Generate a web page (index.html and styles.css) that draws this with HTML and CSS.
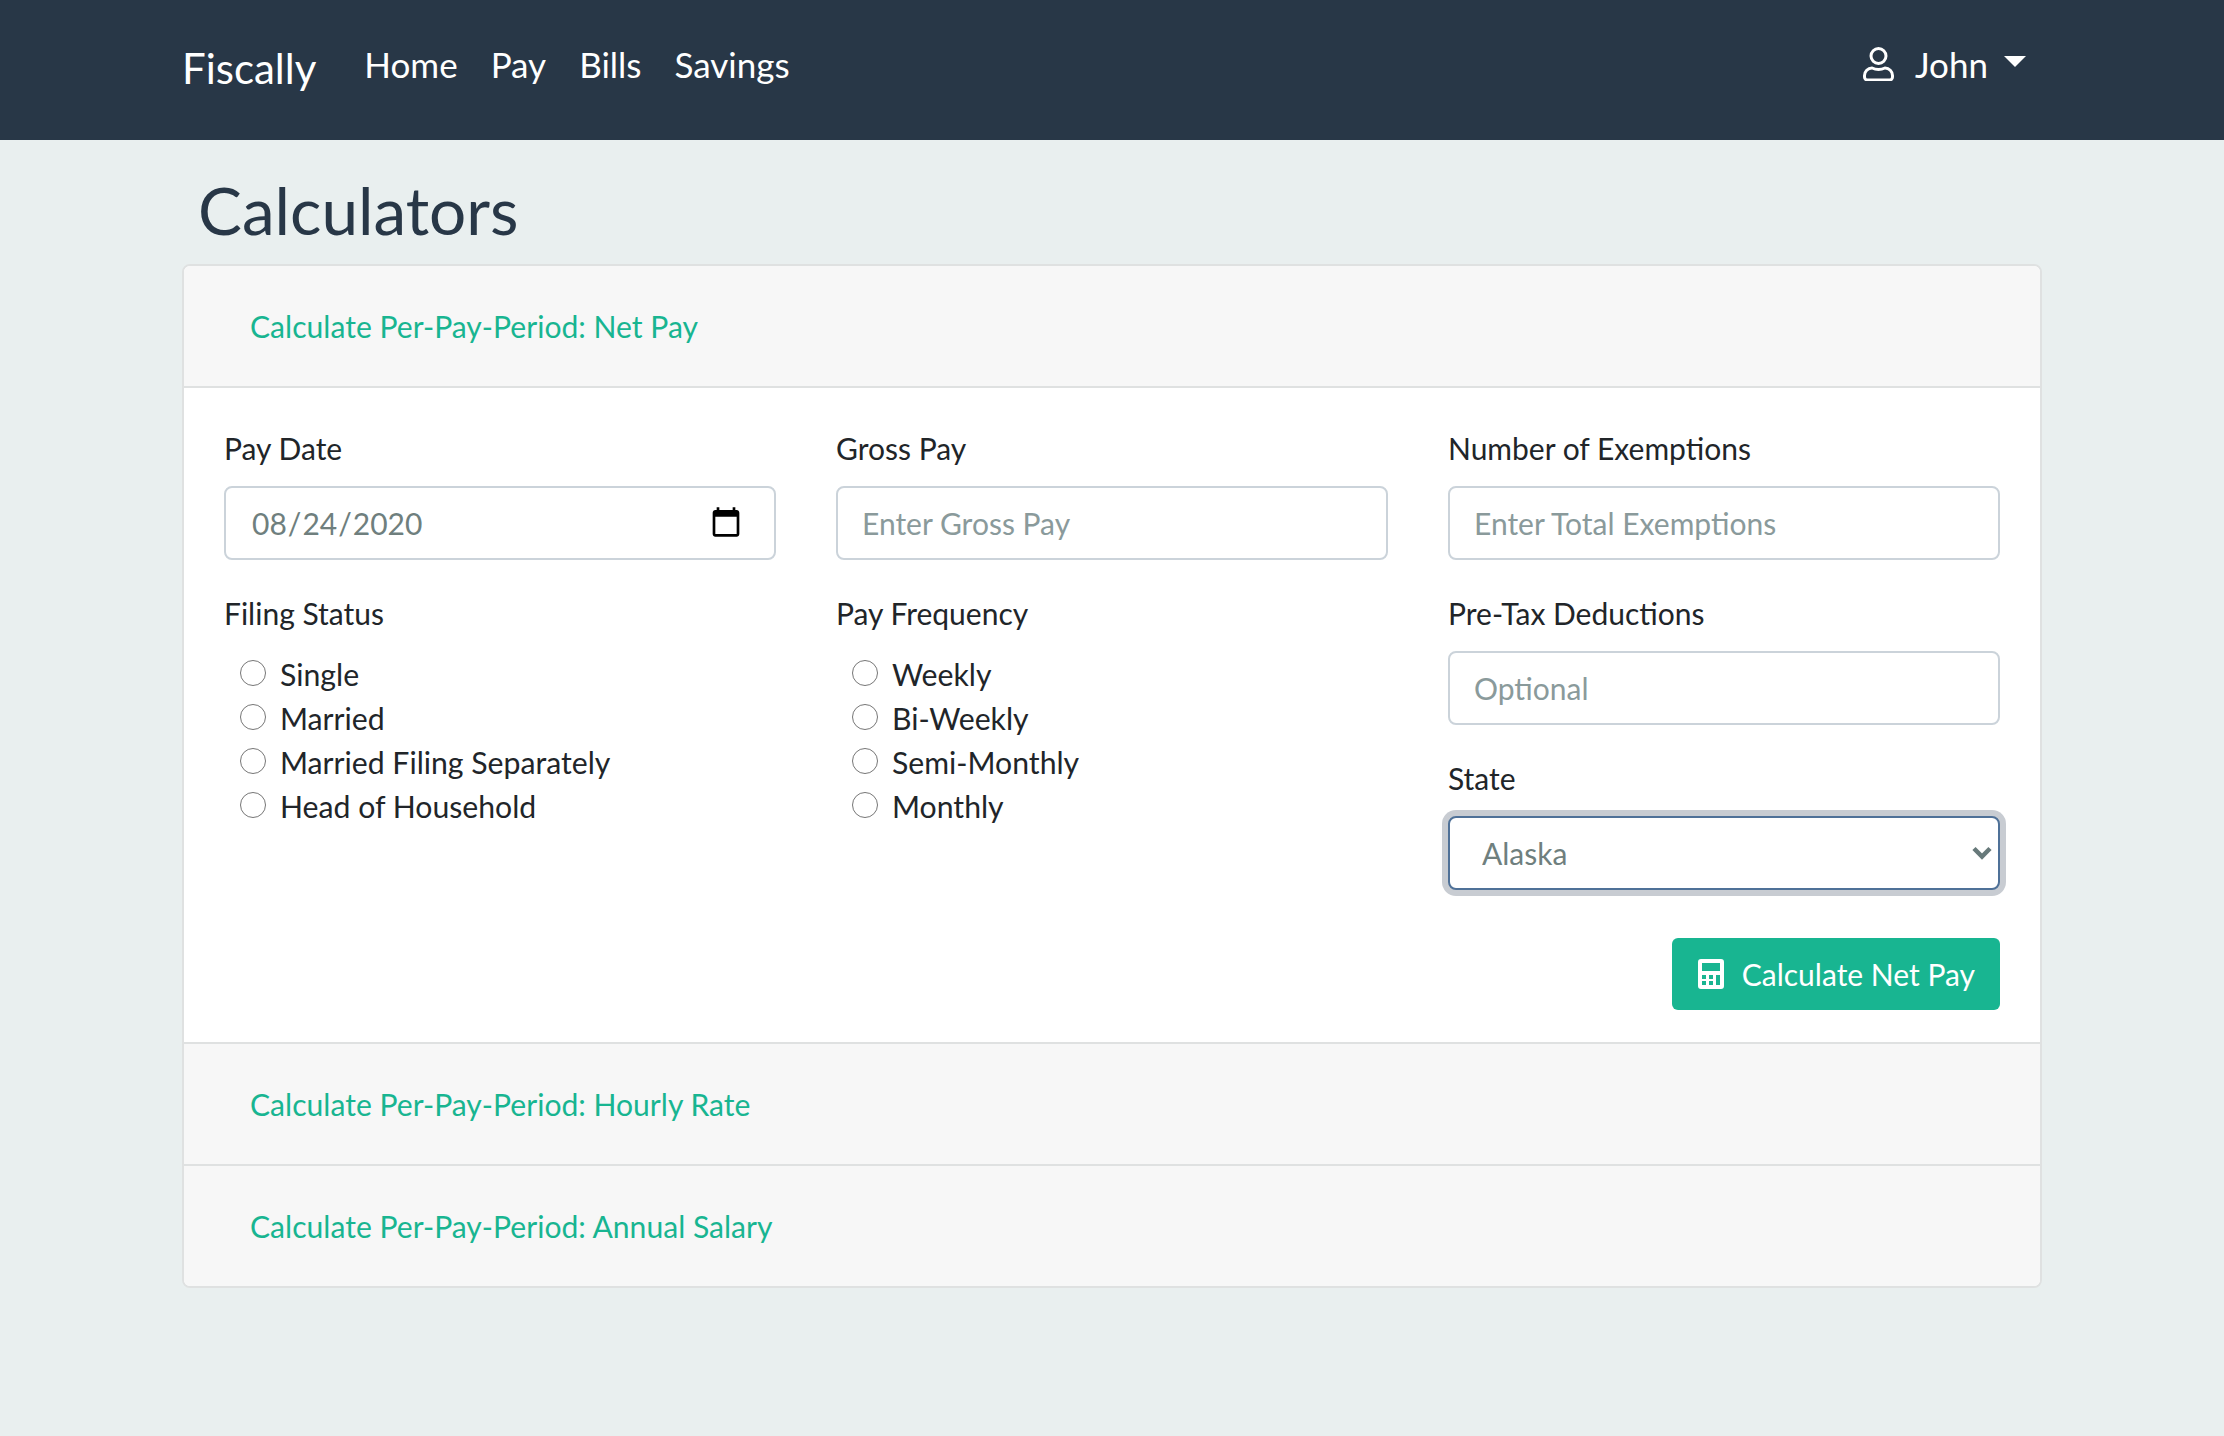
FILE: index.html
```html
<!DOCTYPE html>
<html>
<head>
<meta name="viewport" content="width=device-width, initial-scale=1.0"/>
<title>Fiscally</title>
<link rel="stylesheet" href="styles.css">
</head>
<body>
<nav class="navbar">
    <a class="brand" href="#">Fiscally</a>
    <a class="nav-link" href="#">Home</a>
    <a class="nav-link" href="#">Pay</a>
    <a class="nav-link" href="#">Bills</a>
    <a class="nav-link" href="#">Savings</a>
    <a class="user" href="#">
        <svg class="user-icon" viewBox="0 0 31 34" fill="none" stroke="#fff" stroke-width="3">
            <circle cx="15.5" cy="9" r="7.5"/>
            <path d="M9 21c2 1 4 1.6 6.5 1.6s4.500-.6 6.500-1.600a7.500 7.500 0 0 1 7.500 7.500v1.500a3 3 0 0 1-3 3H4.500a3 3 0 0 1-3-3v-1.500a7.500 7.500 0 0 1 7.500-7.500z"/>
        </svg>
        John
        <span class="caret"></span>
    </a>
</nav>

<main class="container">
    <h1 class="title">Calculators</h1>
    <div class="card">
        <div class="card-header"><a href="#">Calculate Per-Pay-Period: Net Pay</a></div>
        <form class="card-body">
            <div class="columns">
                <div class="col">
                    <label class="lbl">Pay Date</label>
                    <input class="field date" type="date" value="2020-08-24">
                    <label class="lbl">Filing Status</label>
                    <div class="radios">
                        <label class="radio"><input type="radio" name="filing">Single</label>
                        <label class="radio"><input type="radio" name="filing">Married</label>
                        <label class="radio"><input type="radio" name="filing">Married Filing Separately</label>
                        <label class="radio"><input type="radio" name="filing">Head of Household</label>
                    </div>
                </div>
                <div class="col">
                    <label class="lbl">Gross Pay</label>
                    <input class="field" type="text" placeholder="Enter Gross Pay">
                    <label class="lbl">Pay Frequency</label>
                    <div class="radios">
                        <label class="radio"><input type="radio" name="freq">Weekly</label>
                        <label class="radio"><input type="radio" name="freq">Bi-Weekly</label>
                        <label class="radio"><input type="radio" name="freq">Semi-Monthly</label>
                        <label class="radio"><input type="radio" name="freq">Monthly</label>
                    </div>
                </div>
                <div class="col">
                    <label class="lbl">Number of Exemptions</label>
                    <input class="field" type="text" placeholder="Enter Total Exemptions">
                    <label class="lbl">Pre-Tax Deductions</label>
                    <input class="field" type="text" placeholder="Optional">
                    <label class="lbl">State</label>
                    <div class="select-wrap">
                        <select class="field state">
                            <option>Alaska</option>
                        </select>
                        <svg class="chevron" viewBox="0 0 20 14" fill="none" stroke="#67797a" stroke-width="4.5">
                            <path d="M2 2.500l8 8 8-8"/>
                        </svg>
                    </div>
                </div>
            </div>
            <div class="actions">
                <button class="btn" type="button">
                    <svg class="calc" viewBox="0 0 26 30" fill="#fff">
                        <path fill-rule="evenodd" d="M3 0h20a3 3 0 0 1 3 3v24a3 3 0 0 1-3 3H3a3 3 0 0 1-3-3V3a3 3 0 0 1 3-3zM4 4v8h18V4zM4 16v4h4v-4zM11 16v4h4v-4zM18 16v10h4V16zM4 22v4h4v-4zM11 22v4h4v-4z"/>
                    </svg>
                    Calculate Net Pay
                </button>
            </div>
        </form>
        <div class="card-header"><a href="#">Calculate Per-Pay-Period: Hourly Rate</a></div>
        <div class="card-header last"><a href="#">Calculate Per-Pay-Period: Annual Salary</a></div>
    </div>
</main>
</body>
</html>
```

FILE: styles.css
```css
* {
    box-sizing: border-box;
}

body {
    margin: 0;
    min-height: 1436px;
    background-color: #e9efef;
    color: #212529;
    font-family: Lato, "Liberation Sans", sans-serif;
    font-size: 30px;
    line-height: 44px;
}

a {
    text-decoration: none;
}

.navbar {
    display: flex;
    align-items: center;
    height: 140px;
    padding: 0 182px 12px;
    background-color: #283747;
}

.brand {
    margin-top: 8px;
    margin-right: 48px;
    color: #fff;
    font-size: 42px;
}

.nav-link {
    margin-right: 33px;
    color: #fff;
    font-size: 35px;
}

.user {
    display: flex;
    align-items: center;
    margin-left: auto;
    margin-right: 16px;
    color: #fff;
    font-size: 35px;
}

.user-icon {
    width: 31px;
    height: 34px;
    margin-right: 21px;
}

.caret {
    width: 0;
    height: 0;
    margin-left: 16px;
    margin-bottom: 6px;
    border-top: 11px solid #fff;
    border-left: 11px solid transparent;
    border-right: 11px solid transparent;
}

.container {
    padding: 0 182px;
}

.title {
    margin: 0;
    padding: 30px 16px 15px;
    color: #283747;
    font-size: 65.7px;
    font-weight: 400;
    line-height: 79px;
}

.card {
    overflow: hidden;
    background-color: #fff;
    border: 2px solid #dfe1e1;
    border-radius: 8px;
}

.card-header {
    height: 122px;
    padding: 38px 66px;
    background-color: #f7f7f7;
    border-bottom: 2px solid #dfe1e1;
    font-size: 30.1px;
}

.card-header a {
    color: #18b591;
}

.card-header.last {
    height: 120px;
    border-bottom: none;
}

.card-body {
    padding: 38px 40px 32px;
    border-bottom: 2px solid #dfe1e1;
}

.columns {
    display: grid;
    grid-template-columns: repeat(3, 552px);
    column-gap: 60px;
}

.col {
    display: flex;
    flex-direction: column;
}

.lbl {
    display: block;
    margin-bottom: 16px;
}

.field {
    display: block;
    width: 100%;
    height: 74px;
    margin-bottom: 31px;
    padding: 0 24px;
    background-color: #fff;
    border: 2px solid #cbd3da;
    border-radius: 8px;
    color: #6f7f7e;
    font-family: inherit;
    font-size: 30px;
}

.field::placeholder {
    color: #8a9a9b;
    opacity: 1;
}

.date {
    padding: 0 25px;
}

.date::-webkit-calendar-picker-indicator {
    width: 34px;
    height: 34px;
    padding: 0;
    margin-right: 6px;
}

.radios {
    padding-left: 16px;
    padding-top: 1px;
}

.radio {
    display: flex;
    align-items: center;
    height: 44px;
    font-size: 30.2px;
}

.radio input {
    width: 26px;
    height: 26px;
    margin: -2px 14px 0 0;
    flex: none;
}

.select-wrap {
    position: relative;
}

.state {
    margin-bottom: 0;
    padding: 0 32px;
    border-color: #4f7198;
    box-shadow: 0 0 0 6px #c8ccd2;
    appearance: none;
}

.chevron {
    position: absolute;
    top: 30px;
    right: 8px;
    width: 20px;
    height: 14px;
}

.actions {
    display: flex;
    justify-content: flex-end;
    margin-top: 48px;
}

.btn {
    display: flex;
    align-items: center;
    height: 72px;
    padding: 0 25px 0 26px;
    background-color: #18b591;
    border: none;
    border-radius: 6px;
    color: #fff;
    font-family: inherit;
    font-size: 30px;
}

.calc {
    width: 26px;
    height: 30px;
    margin-right: 18px;
}
```
